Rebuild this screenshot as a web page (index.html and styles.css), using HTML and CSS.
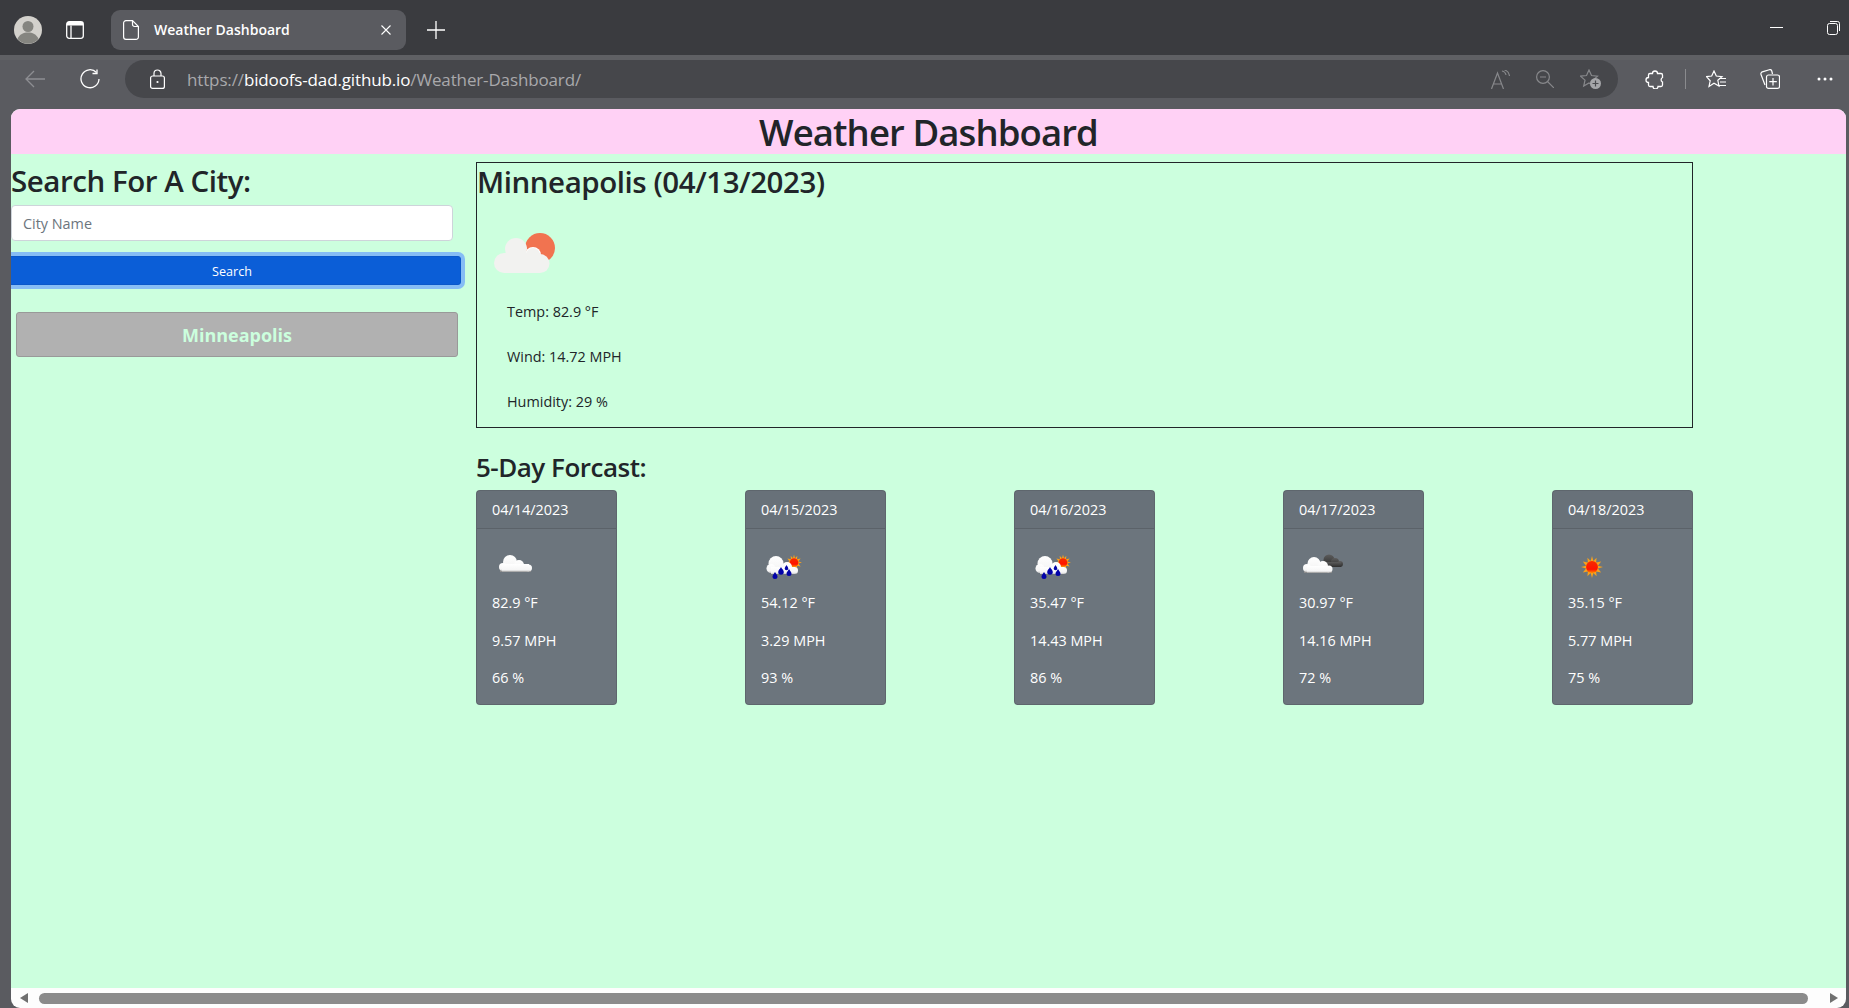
FILE: index.html
```html
<!DOCTYPE html>
<html lang="en">
<head>
  <meta charset="UTF-8">
  <title>Weather Dashboard</title>
  <link rel="stylesheet" href="styles.css">
</head>
<body>

  <svg class="icon-defs" aria-hidden="true">
    <defs>
      <linearGradient id="cloudFill" x1="0" y1="0" x2="0" y2="1">
        <stop offset="0" stop-color="#ffffff"/>
        <stop offset="0.75" stop-color="#f6f6f6"/>
        <stop offset="1" stop-color="#c9c9c9"/>
      </linearGradient>
      <linearGradient id="darkFill" x1="0" y1="0" x2="0" y2="1">
        <stop offset="0" stop-color="#5c5c5c"/>
        <stop offset="1" stop-color="#2f2f2f"/>
      </linearGradient>
      <linearGradient id="sunFill" x1="0" y1="0" x2="0" y2="1">
        <stop offset="0" stop-color="#f52b00"/>
        <stop offset="0.7" stop-color="#ff1400"/>
        <stop offset="1" stop-color="#ff8a00"/>
      </linearGradient>
      <symbol id="sunRays" viewBox="0 0 24 24">
        <path fill="#f9a11b" d="M12 0l1.500 5.500L17 2l-.5 5L22 6l-3.500 4.500L24 12l-5.500 1.500L22 18l-5.500-1 .5 5-3.500-3.500L12 24l-1.500-5.500L7 22l.5-5L2 18l3.500-4.500L0 12l5.500-1.500L2 6l5.500 1L7 2l3.500 3.500z"/>
        <circle cx="12" cy="12" r="6.500" fill="url(#sunFill)"/>
      </symbol>
      <symbol id="cloudSmall" viewBox="0 0 50 50">
        <rect x="8" y="28" width="31" height="2" fill="#8e8e8e"/>
        <g fill="url(#cloudFill)">
          <circle cx="18" cy="20" r="7"/>
          <circle cx="27" cy="23" r="5"/>
          <circle cx="11" cy="25" r="4"/>
          <circle cx="36.500" cy="26" r="3.500"/>
          <rect x="10" y="22" width="27" height="7.500"/>
        </g>
      </symbol>
      <symbol id="rainSun" viewBox="0 0 50 50">
        <use href="#sunRays" x="25" y="12.500" width="16" height="16"/>
        <g fill="url(#cloudFill)">
          <circle cx="15" cy="21.500" r="7.500"/>
          <circle cx="26" cy="25" r="5"/>
          <circle cx="10" cy="26.500" r="4.500"/>
          <circle cx="33.500" cy="28.500" r="3.500"/>
          <rect x="10" y="25" width="24" height="7"/>
        </g>
        <g fill="#0202a8" transform="translate(3 1)">
          <path d="M11 29c-1 2-2.500 3-2.500 4.500a2.500 2.500 0 0 0 5 0C13.500 32 12 31 11 29z"/>
          <path d="M17 24c-1 2-2.800 3.300-2.800 5a2.800 2.800 0 0 0 5.600 0C19.800 27.300 18 26 17 24z"/>
          <path d="M22.500 22c-.7 1.500-1.800 2.300-1.800 3.500a1.800 1.800 0 0 0 3.600 0c0-1.200-1.100-2-1.800-3.500z"/>
          <path d="M25 26c-.9 2-2.500 3-2.500 4.500a2.500 2.500 0 0 0 5 0C27.500 29 26 28 25 26z"/>
        </g>
      </symbol>
    </defs>
  </svg>

  <div class="browser">
    <div class="tabbar">
      <svg class="avatar" viewBox="0 0 28 28">
        <circle cx="14" cy="14" r="14" fill="#d3d1cc"/>
        <circle cx="14" cy="10.500" r="5.500" fill="#858580"/>
        <path d="M3.500 23c2-5 6-6.500 10.500-6.500S22.500 18 24.500 23A14 14 0 0 1 3.500 23z" fill="#858580"/>
      </svg>
      <svg class="tabs-btn" viewBox="0 0 18 18" fill="none" stroke="#fff" stroke-width="1.300">
        <rect x=".7" y=".7" width="16.600" height="16.600" rx="2.500"/>
        <path d="M5 4.500V17" />
        <rect x="1" y="1" width="16" height="3.500" fill="#fff" stroke="none"/>
      </svg>
      <div class="tab">
        <svg class="tab-page" viewBox="0 0 16 20" fill="none" stroke="#fff" stroke-width="1.200">
          <path d="M3 .6h6.500L15.400 6.500V17a2.400 2.400 0 0 1-2.400 2.400H3A2.400 2.400 0 0 1 .6 17V3A2.400 2.400 0 0 1 3 .6z"/>
          <path d="M9.500.6V4.500a2 2 0 0 0 2 2h3.900"/>
        </svg>
        <span class="tab-title">Weather Dashboard</span>
        <svg class="tab-close" viewBox="0 0 10 10" fill="none" stroke="#fff" stroke-width="1.100">
          <path d="M.5.500l9 9M9.500.500l-9 9"/>
        </svg>
      </div>
      <svg class="new-tab" viewBox="0 0 18 18" fill="none" stroke="#fff" stroke-width="1.300">
        <path d="M9 0v18M0 9h18"/>
      </svg>
      <div class="window-btns">
        <svg class="win-min" viewBox="0 0 13 1"><rect width="13" height="1" fill="#fff"/></svg>
        <svg class="win-restore" viewBox="0 0 13 14" fill="none" stroke="#fff" stroke-width="1">
          <rect x=".5" y="2.500" width="10" height="11" rx="2"/>
          <path d="M3 .5h7.500a2 2 0 0 1 2 2V10"/>
        </svg>
      </div>
    </div>

    <div class="toolbar">
      <svg class="tool-back" viewBox="0 0 20 18" fill="none" stroke="#8d8e92" stroke-width="1.300">
        <path d="M20 9H1M9 1L1 9l8 8"/>
      </svg>
      <svg class="tool-reload" viewBox="0 0 20 20" fill="none" stroke="#fff" stroke-width="1.300">
        <path d="M16.500 3.500A9 9 0 1 0 19 10"/>
        <path d="M17 .5v4h-4.500"/>
      </svg>
      <div class="address">
        <svg class="lock" viewBox="0 0 15 20" fill="none" stroke="#fff" stroke-width="1.200">
          <rect x=".6" y="7" width="13.800" height="12.400" rx="2"/>
          <path d="M4 7V4.500a3.500 3.500 0 0 1 7 0V7"/>
          <circle cx="7.500" cy="13" r="1.100" fill="#fff" stroke="none"/>
        </svg>
        <span class="url">https://<span class="url-host">bidoofs-dad.github.io</span>/Weather-Dashboard/</span>
        <div class="address-icons">
          <svg class="addr-read" viewBox="0 0 19 19" fill="none" stroke="#87888b" stroke-width="1.200">
            <path d="M.5 19L6.500 3l6 16M2.500 14h8"/>
            <path d="M11 1c2 .3 3.500 1.500 4 4M13.500 0c2.500.6 4.500 2.500 5 6"/>
          </svg>
          <svg class="addr-zoom" viewBox="0 0 18 18" fill="none" stroke="#87888b" stroke-width="1.200">
            <circle cx="7" cy="7" r="6.400"/>
            <path d="M11.500 11.500L18 18M4 7h6"/>
          </svg>
          <svg class="addr-fav" viewBox="0 0 21 20">
            <path fill="none" stroke="#87888b" stroke-width="1.200" d="M9 1l2.500 5.500 6 .6-4.500 4 1.300 5.900L9 14l-5.300 3 1.300-5.900-4.500-4 6-.6z"/>
            <circle cx="15.500" cy="14.500" r="5.500" fill="#a5a6a9"/>
            <path stroke="#4a4b4f" stroke-width="1.200" d="M15.500 11.500v6M12.500 14.500h6"/>
          </svg>
        </div>
      </div>
      <div class="tool-icons">
        <svg class="tool-ext" viewBox="0 0 19 19" fill="none" stroke="#fff" stroke-width="1.300">
          <path d="M7.500 3.500a2.500 2.500 0 0 1 5 0H16a1.500 1.500 0 0 1 1.500 1.500v2.500a2.500 2.500 0 0 0 0 4.500V15a1.500 1.500 0 0 1-1.500 1.500h-3a2.500 2.500 0 0 1-5 0H5A1.500 1.500 0 0 1 3.500 15v-2.500a2.500 2.500 0 0 1 0-5V5A1.500 1.500 0 0 1 5 3.500z"/>
        </svg>
        <span class="tool-sep"></span>
        <svg class="tool-favs" viewBox="0 0 20 19" fill="none" stroke="#fff" stroke-width="1.200">
          <path d="M8 1l2.300 5 5.700.6-4.200 3.700 1.200 5.700L8 13.300 3 16.500l1.200-5.700L.4 6.600 5.700 6z"/>
          <path d="M13 8.500h7M14 12h6M13 15.500h7"/>
        </svg>
        <svg class="tool-coll" viewBox="0 0 20 20" fill="none" stroke="#fff" stroke-width="1.200">
          <path d="M5 16L1 5.500a2 2 0 0 1 1.300-2.600l7-2.200a2 2 0 0 1 2.500 1.300L12.500 5"/>
          <rect x="6.500" y="6" width="13" height="13.400" rx="2"/>
          <path d="M13 9v7.500M9.300 12.700h7.500"/>
        </svg>
        <svg class="tool-more" viewBox="0 0 16 4" fill="#fff">
          <circle cx="2" cy="2" r="1.500"/>
          <circle cx="8" cy="2" r="1.500"/>
          <circle cx="14" cy="2" r="1.500"/>
        </svg>
      </div>
    </div>

    <div class="viewport">
      <div class="page">
        <header class="page-header">
          <h1>Weather Dashboard</h1>
        </header>

        <div class="page-row">
          <aside class="sidebar">
            <h2>Search For A City:</h2>
            <input class="city-input" type="text" placeholder="City Name">
            <button class="search-btn" type="button">Search</button>
            <button class="history-btn" type="button">Minneapolis</button>
          </aside>

          <main class="content">
            <section class="today">
              <h2>Minneapolis (04/13/2023)</h2>
              <svg class="today-icon" viewBox="0 0 100 100">
                <circle cx="63" cy="47" r="15" fill="#f17350"/>
                <circle cx="56" cy="54" r="8" fill="#fff"/>
                <g fill="#f2f2f0">
                  <circle cx="39" cy="48" r="11"/>
                  <circle cx="27" cy="62" r="10"/>
                  <circle cx="56" cy="54" r="7"/>
                  <circle cx="63" cy="62.500" r="9.500"/>
                  <rect x="27" y="52" width="36" height="20"/>
                </g>
              </svg>
              <p class="today-stat">Temp: 82.9 °F</p>
              <p class="today-stat">Wind: 14.72 MPH</p>
              <p class="today-stat">Humidity: 29 %</p>
            </section>

            <h3>5-Day Forcast:</h3>
            <div class="forecast">
              <div class="card">
                <div class="card-header">04/14/2023</div>
                <div class="card-body">
                  <svg class="card-icon" viewBox="0 0 50 50"><use href="#cloudSmall" width="50" height="50"/></svg>
                  <p>82.9 °F</p>
                  <p>9.57 MPH</p>
                  <p>66 %</p>
                </div>
              </div>
              <div class="card">
                <div class="card-header">04/15/2023</div>
                <div class="card-body">
                  <svg class="card-icon" viewBox="0 0 50 50"><use href="#rainSun" width="50" height="50"/></svg>
                  <p>54.12 °F</p>
                  <p>3.29 MPH</p>
                  <p>93 %</p>
                </div>
              </div>
              <div class="card">
                <div class="card-header">04/16/2023</div>
                <div class="card-body">
                  <svg class="card-icon" viewBox="0 0 50 50"><use href="#rainSun" width="50" height="50"/></svg>
                  <p>35.47 °F</p>
                  <p>14.43 MPH</p>
                  <p>86 %</p>
                </div>
              </div>
              <div class="card">
                <div class="card-header">04/17/2023</div>
                <div class="card-body">
                  <svg class="card-icon" viewBox="0 0 50 50">
                    <g fill="url(#darkFill)">
                      <circle cx="30" cy="18" r="5.500"/>
                      <circle cx="36" cy="20" r="4"/>
                      <circle cx="41" cy="22" r="3"/>
                      <rect x="26" y="20" width="16" height="5"/>
                    </g>
                    <rect x="5" y="29" width="28" height="2" fill="#8e8e8e"/>
                    <g fill="url(#cloudFill)">
                      <circle cx="15" cy="21.500" r="6.500"/>
                      <circle cx="24" cy="24" r="5"/>
                      <circle cx="8" cy="26" r="4"/>
                      <circle cx="30" cy="27" r="3.500"/>
                      <rect x="8" y="24" width="22" height="6.500"/>
                    </g>
                  </svg>
                  <p>30.97 °F</p>
                  <p>14.16 MPH</p>
                  <p>72 %</p>
                </div>
              </div>
              <div class="card">
                <div class="card-header">04/18/2023</div>
                <div class="card-body">
                  <svg class="card-icon" viewBox="0 0 50 50">
                    <use href="#sunRays" x="13" y="14" width="22" height="22"/>
                  </svg>
                  <p>35.15 °F</p>
                  <p>5.77 MPH</p>
                  <p>75 %</p>
                </div>
              </div>
            </div>
          </main>
        </div>
      </div>

      <div class="hscroll">
        <span class="hscroll-arrow left"></span>
        <span class="hscroll-thumb"></span>
        <span class="hscroll-arrow right"></span>
      </div>
    </div>
  </div>

</body>
</html>
```

FILE: styles.css
```css
* {
  box-sizing: border-box;
}

html, body {
  height: 100%;
}

body {
  margin: 0;
  overflow: hidden;
  background: #5a5b60;
  font-family: "Open Sans", "Noto Sans", Arial, sans-serif;
}

.icon-defs {
  display: block;
  width: 0;
  height: 0;
  overflow: hidden;
}

svg {
  display: block;
  flex: none;
}

.browser {
  height: 100%;
  display: flex;
  flex-direction: column;
}

/* title bar */
.tabbar {
  height: 55px;
  padding: 5px 0 0 14px;
  background: #3a3b3f;
  display: flex;
  align-items: center;
}

.avatar {
  width: 28px;
  height: 28px;
}

.tabs-btn {
  width: 18px;
  height: 18px;
  margin-left: 24px;
}

.tab {
  width: 295px;
  height: 40px;
  margin-left: 27px;
  padding: 0 14px 0 12px;
  background: #5a5b60;
  border-radius: 9px;
  display: flex;
  align-items: center;
}

.tab-page {
  width: 16px;
  height: 20px;
}

.tab-title {
  margin: 0 0 2px 15px;
  flex: 1;
  color: #fff;
  font-size: 14px;
  font-weight: 600;
}

.tab-close {
  width: 10px;
  height: 10px;
  margin-right: 1px;
}

.new-tab {
  width: 18px;
  height: 18px;
  margin-left: 21px;
}

.window-btns {
  margin-left: auto;
  display: flex;
  align-items: center;
  padding-right: 9px;
}

.win-min {
  width: 13px;
  height: 1px;
  margin-top: -6px;
}

.win-restore {
  width: 13px;
  height: 14px;
  margin-left: 44px;
  margin-top: -5px;
}

/* address bar */
.toolbar {
  height: 54px;
  display: flex;
  align-items: center;
  padding: 0 0 11px 25px;
  border-top: 5px solid #5f6064;
  background: #5a5b60;
}

.tool-back {
  width: 20px;
  height: 18px;
}

.tool-reload {
  width: 20px;
  height: 20px;
  margin-left: 35px;
}

.address {
  width: 1493px;
  height: 38px;
  margin-left: 25px;
  padding: 0 17px 0 25px;
  background: #46474b;
  border-radius: 19px;
  display: flex;
  align-items: center;
}

.lock {
  width: 15px;
  height: 20px;
}

.url {
  margin-left: 22px;
  color: #a9a9ab;
  font-size: 17px;
  letter-spacing: -0.14px;
}

.url-host {
  color: #fff;
}

.address-icons {
  margin-left: auto;
  display: flex;
  align-items: center;
}

.addr-read {
  width: 19px;
  height: 19px;
}

.addr-zoom {
  width: 18px;
  height: 18px;
  margin-left: 26px;
}

.addr-fav {
  width: 21px;
  height: 20px;
  margin-left: 26px;
}

.tool-icons {
  display: flex;
  align-items: center;
  margin-left: 27px;
}

.tool-ext {
  width: 19px;
  height: 19px;
}

.tool-sep {
  width: 1px;
  height: 20px;
  margin-left: 21px;
  background: #8a8b8e;
}

.tool-favs {
  width: 20px;
  height: 19px;
  margin-left: 20px;
}

.tool-coll {
  width: 20px;
  height: 20px;
  margin-left: 34px;
}

.tool-more {
  width: 16px;
  height: 4px;
  margin-left: 37px;
}

/* rendered site */
.viewport {
  flex: 1;
  min-height: 0;
  margin: 0 3px 0 11px;
  display: flex;
  flex-direction: column;
  border-radius: 9px;
  overflow: hidden;
}

.page {
  flex: 1;
  background: #ccffde;
  color: #212529;
}

.page-header {
  height: 45px;
  padding-top: 2px;
  background: #ffd1f5;
  text-align: center;
}

h1 {
  margin: 0;
  font-size: 36.5px;
  font-weight: 600;
  letter-spacing: -0.9px;
  line-height: 43px;
}

h2 {
  margin: 0;
  font-size: 29.5px;
  font-weight: 600;
  letter-spacing: -0.45px;
  line-height: 38.4px;
}

h3 {
  margin: 23px 0 5px;
  font-size: 26px;
  font-weight: 600;
  letter-spacing: -0.5px;
  line-height: 33.6px;
}

.page-row {
  display: grid;
  grid-template-columns: 465px 1217px;
  padding-top: 8px;
}

.sidebar {
  display: flex;
  flex-direction: column;
  align-items: flex-start;
}

.city-input {
  width: 442px;
  height: 36px;
  margin-top: 5px;
  padding: 0 11px;
  border: 1px solid #ced4da;
  border-radius: 4px;
  background: #fff;
  font-family: inherit;
  font-size: 14.4px;
}

.city-input::placeholder {
  color: #6c757d;
}

.search-btn {
  width: 458px;
  height: 29px;
  margin: 15px 0 0 -8px;
  padding-top: 2px;
  border: 1px solid #0a58ca;
  border-radius: 3px;
  background: #0b5ed7;
  box-shadow: 0 0 0 4px #86bdf5;
  color: #fff;
  font-family: inherit;
  font-size: 12.6px;
}

.history-btn {
  width: 442px;
  height: 45px;
  margin: 27px 0 0 5px;
  border: 1px solid #999;
  border-radius: 3px;
  background: #b1b1b1;
  color: #ccffde;
  font-family: inherit;
  font-size: 18px;
  font-weight: 700;
}

.today {
  height: 266px;
  border: 1px solid #212529;
}

.today-icon {
  width: 100px;
  height: 100px;
}

.today-stat {
  margin: 0 0 23.4px 30px;
  font-size: 14.4px;
  line-height: 21.6px;
}

.forecast {
  display: flex;
  justify-content: space-between;
}

.card {
  width: 141px;
  height: 215px;
  border: 1px solid rgba(0, 0, 0, 0.125);
  border-radius: 4px;
  background: #6c757d;
  color: #fff;
  font-size: 14.4px;
  line-height: 21.6px;
}

.card-header {
  padding: 8px 15px;
  background: rgba(0, 0, 0, 0.03);
  border-bottom: 1px solid rgba(0, 0, 0, 0.125);
}

.card-body {
  padding: 13px 15px 0;
}

.card-icon {
  width: 50px;
  height: 50px;
}

.card-body p {
  margin: 0 0 16px;
}

/* horizontal scrollbar of the window */
.hscroll {
  height: 20px;
  background: #fdfdfd;
  display: flex;
  align-items: center;
  padding: 0 8px 0 9px;
}

.hscroll-arrow {
  width: 0;
  height: 0;
  border-top: 5px solid transparent;
  border-bottom: 5px solid transparent;
}

.hscroll-arrow.left {
  border-right: 8px solid #707070;
}

.hscroll-arrow.right {
  border-left: 8px solid #707070;
}

.hscroll-thumb {
  width: 1769px;
  height: 11px;
  margin: 0 22px 0 11px;
  background: #8b8b8b;
  border-radius: 5.5px;
}
```
